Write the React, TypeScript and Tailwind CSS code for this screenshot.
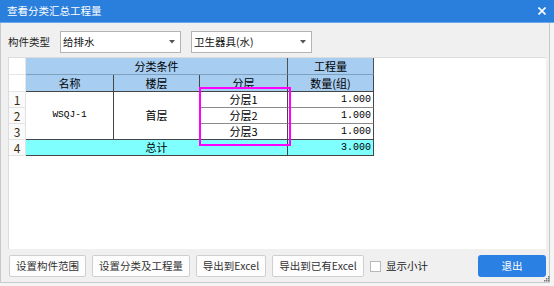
import React from 'react';

const cjk = { fontFamily: '"Noto Sans CJK SC", "Noto Sans", sans-serif' };
const mono = { fontFamily: '"Liberation Mono", monospace' };

const Select = ({ value }: { value: string }) => (
  <div className="w-[121px] h-[22px] bg-white border border-[#b4b4b4] flex items-center pl-[2px] pr-[5px] text-[10.5px] text-[#111]">
    <span className="flex-1">{value}</span>
    <svg width="6" height="4" viewBox="0 0 6 4">
      <path d="M0 0 L6 0 L3 3.5 Z" fill="#555" />
    </svg>
  </div>
);

const Btn = ({ label, w }: { label: string; w: string }) => (
  <button className={`${w} h-[22px] bg-[#fdfdfd] border border-[#cfcfcf] rounded-[2px] text-[10.5px] text-[#333] flex items-center justify-center`}>
    {label}
  </button>
);

const rowHead = 'bg-[#fafafa] border-r border-b border-[#e2e2e2] flex items-center justify-center text-[12px] text-[#3a2a10]';

export default function App() {
  const rows = ['分层1', '分层2', '分层3'];
  return (
    <div className="w-[554px] h-[286px] bg-[#f4f4f4] overflow-hidden" style={cjk}>
      <div className="h-[23px] bg-[#2b7fdc] border-b border-[#6aa6ea] flex items-center pl-[7px] pr-[8px]">
        <span className="flex-1 text-white text-[10.5px] leading-none">查看分类汇总工程量</span>
        <svg width="8" height="8" viewBox="0 0 8 8">
          <path d="M0.5 0.5 L7.5 7.5 M7.5 0.5 L0.5 7.5" stroke="#fff" strokeWidth="1.6" />
        </svg>
      </div>
      <div className="relative w-[550px] h-[260px] bg-[#f0f0f0] border-r border-b border-l border-[#c9c9c9] flex flex-col pl-[7px] pr-[3px]">
        <div className="mt-[8px] h-[22px] flex items-center">
          <span className="w-[52px] text-[10.5px] text-[#222]">构件类型</span>
          <Select value="给排水" />
          <div className="w-[10px]" />
          <Select value="卫生器具(水)" />
        </div>

        <div className="relative mt-[4px] h-[192px] w-[538px] bg-white border-l border-t border-[#dcdcdc]">
          <div className="grid grid-cols-[17px_88px_86px_88px_86px] grid-rows-[17px_17px_16px_16px_16px_16px] text-[11px] text-black">
            <div className="bg-white border-r border-b border-[#e6e6e6]" />
            <div className="col-span-3 bg-[#a7cdf1] border-r border-b border-r-[#505050] border-b-[#7f9fbf] flex items-center justify-center">分类条件</div>
            <div className="bg-[#a7cdf1] border-r border-b border-r-[#505050] border-b-[#7f9fbf] flex items-center justify-center">工程量</div>

            <div className="bg-white border-r border-b border-[#e6e6e6]" />
            <div className="bg-[#a7cdf1] border-r border-b border-[#454545] flex items-center justify-center">名称</div>
            <div className="bg-[#a7cdf1] border-r border-b border-[#454545] flex items-center justify-center">楼层</div>
            <div className="bg-[#a7cdf1] border-r border-b border-[#454545] flex items-center justify-center">分层</div>
            <div className="bg-[#a7cdf1] border-r border-b border-[#454545] flex items-center justify-center">数量(组)</div>

            <div className={rowHead}>1</div>
            <div className="row-span-3 border-r border-b border-[#454545] flex items-center justify-center text-[9.5px]" style={mono}>WSQJ-1</div>
            <div className="row-span-3 border-r border-b border-[#454545] flex items-center justify-center">首层</div>
            {rows.map((r, i) => (
              <React.Fragment key={r}>
                {i > 0 && <div className={rowHead}>{i + 1}</div>}
                <div className={`border-r border-r-[#454545] border-b ${i === 2 ? 'border-b-[#454545]' : 'border-b-[#8a8a8a]'} flex items-center justify-center`}>{r}</div>
                <div className={`border-r border-r-[#454545] border-b ${i === 2 ? 'border-b-[#454545]' : 'border-b-[#8a8a8a]'} flex items-center justify-end pr-[2px] text-[10px]`} style={mono}>1.000</div>
              </React.Fragment>
            ))}

            <div className={rowHead}>4</div>
            <div className="col-span-3 bg-[#80ffff] border-r border-b border-[#454545] flex items-center justify-center">总计</div>
            <div className="bg-[#80ffff] border-r border-b border-[#454545] flex items-center justify-end pr-[2px] text-[10px]" style={mono}>3.000</div>
          </div>
          <div className="absolute left-[190px] top-[29px] w-[92px] h-[59px] border-2 border-[#ff00ff]" />
        </div>

        <div className="mt-[6px] h-[22px] flex items-center">
          <div className="w-[1px]" />
          <Btn label="设置构件范围" w="w-[77px]" />
          <div className="w-[6px]" />
          <Btn label="设置分类及工程量" w="w-[98px]" />
          <div className="w-[6px]" />
          <Btn label="导出到Excel" w="w-[70px]" />
          <div className="w-[6px]" />
          <Btn label="导出到已有Excel" w="w-[92px]" />
          <div className="w-[6px]" />
          <div className="w-[11px] h-[11px] bg-white border border-[#b8b8b8]" />
          <span className="ml-[5px] text-[10.5px] text-[#222]">显示小计</span>
          <button className="ml-auto w-[68px] h-[22px] bg-[#2b80e3] rounded-[3px] text-white text-[10.5px] flex items-center justify-center">退出</button>
        </div>
        <svg className="absolute right-[-1px] bottom-[0px]" width="6" height="6" viewBox="0 0 6 6">
          <rect x="4" y="0" width="1.5" height="1.5" fill="#777" />
          <rect x="2" y="2" width="1.5" height="1.5" fill="#777" />
          <rect x="4" y="2" width="1.5" height="1.5" fill="#777" />
          <rect x="0" y="4" width="1.5" height="1.5" fill="#777" />
          <rect x="2" y="4" width="1.5" height="1.5" fill="#777" />
          <rect x="4" y="4" width="1.5" height="1.5" fill="#777" />
        </svg>
      </div>
    </div>
  );
}
